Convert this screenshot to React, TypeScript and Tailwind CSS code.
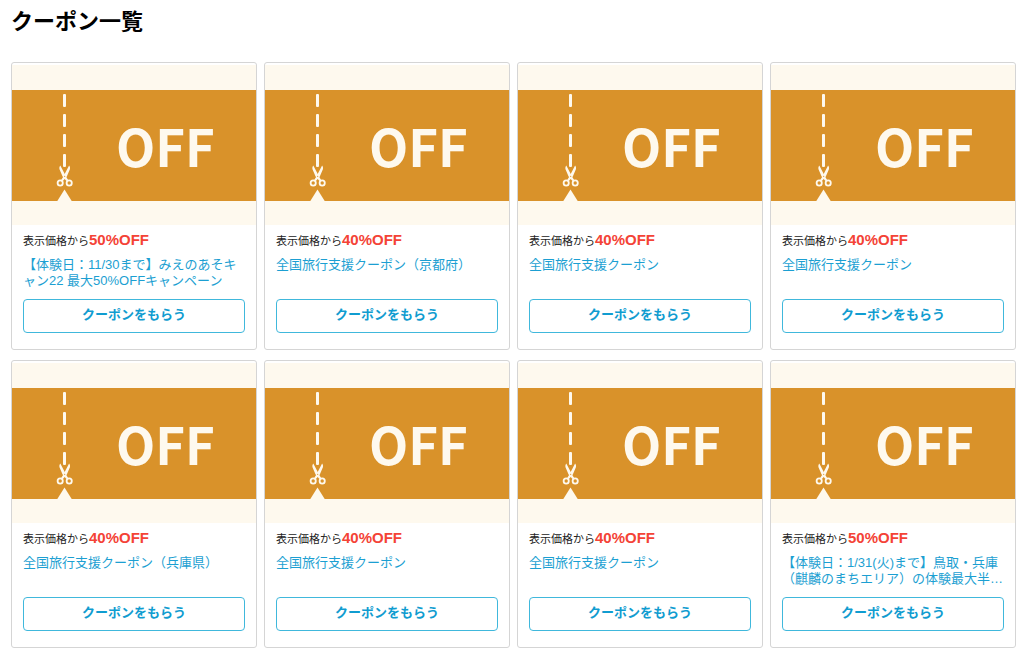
interface Coupon {
    id: number
    discount: string
    title: string
}

const COUPONS: Coupon[] = [
    { id: 1, discount: '50%OFF', title: '【体験日：11/30まで】みえのあそキャン22 最大50%OFFキャンペーン' },
    { id: 2, discount: '40%OFF', title: '全国旅行支援クーポン（京都府）' },
    { id: 3, discount: '40%OFF', title: '全国旅行支援クーポン' },
    { id: 4, discount: '40%OFF', title: '全国旅行支援クーポン' },
    { id: 5, discount: '40%OFF', title: '全国旅行支援クーポン（兵庫県）' },
    { id: 6, discount: '40%OFF', title: '全国旅行支援クーポン' },
    { id: 7, discount: '40%OFF', title: '全国旅行支援クーポン' },
    { id: 8, discount: '50%OFF', title: '【体験日：1/31(火)まで】鳥取・兵庫（麒麟のまちエリア）の体験最大半…' },
]

function CouponImage() {
    return (
        <svg viewBox="0 0 244 160" className="block h-auto w-full" role="img" aria-label="OFF">
            <rect width="244" height="160" fill="#fef9ee" />
            <rect y="25" width="244" height="111" fill="#d9922a" />
            {/* cut line */}
            <g fill="#fef9ee">
                <rect x="51" y="29" width="3" height="13" rx="1" />
                <rect x="51" y="49" width="3" height="13" rx="1" />
                <rect x="51" y="69" width="3" height="13" rx="1" />
                <rect x="51" y="89" width="3" height="13" rx="1" />
                <path d="M52.500 124.500L60 136.500H45Z" />
            </g>
            {/* scissors */}
            <g fill="none" stroke="#fef9ee" strokeWidth="1.8">
                <circle cx="48.200" cy="118" r="2.600" />
                <circle cx="57.200" cy="118" r="2.600" />
            </g>
            <path d="M48.300 100.500Q47 101.500 47.400 104L50.600 111.500L54 115.500L55.500 116.500L56.500 115.500L54.300 112Z" fill="#fef9ee" />
            <path d="M57.100 100.500Q58.400 101.500 58 104L54.800 111.500L51.400 115.500L49.900 116.500L48.900 115.500L51.100 112Z" fill="#fef9ee" />
            <circle cx="52.700" cy="111.300" r="0.600" fill="#d9922a" />
            <text
                x="104"
                y="102"
                fill="#fef9ee"
                className="font-['Noto_Sans_CJK_JP',sans-serif] text-[51px] font-bold"
            >
                OFF
            </text>
        </svg>
    )
}

function CouponCard({ coupon }: { coupon: Coupon }) {
    return (
        <li className="flex flex-col rounded-[3px] border border-[#d5d5d5] bg-white pt-[2px]">
            <CouponImage />
            <div className="flex flex-1 flex-col px-[11px] pt-[5px] pb-4">
                <p className="text-[11px] leading-5 text-[#222]">
                    表示価格から
                    <strong className="text-[15px] font-bold text-[#f44336]">{coupon.discount}</strong>
                </p>
                <h2 className="mt-1.5 h-8 text-[13px] leading-4">
                    <a href="#" className="line-clamp-2 text-[#1c9fd2]">
                        {coupon.title}
                    </a>
                </h2>
                <button
                    type="button"
                    className="mt-2.5 h-[34px] w-full rounded-[4px] border border-[#40b8dc] bg-white pb-0.5 text-[13px] font-bold text-[#109cd0]"
                >
                    クーポンをもらう
                </button>
            </div>
        </li>
    )
}

export default function App() {
    return (
        <main
            lang="ja"
            className="bg-white pt-1.5 pr-2 pb-2 pl-[11px] font-['Liberation_Sans','Noto_Sans_CJK_JP',sans-serif]"
        >
            <h1 className="text-[22px] leading-8 font-bold text-black">クーポン一覧</h1>
            <ul className="mt-6 grid grid-cols-4 gap-x-[7px] gap-y-2.5">
                {COUPONS.map((coupon) => (
                    <CouponCard key={coupon.id} coupon={coupon} />
                ))}
            </ul>
        </main>
    )
}
